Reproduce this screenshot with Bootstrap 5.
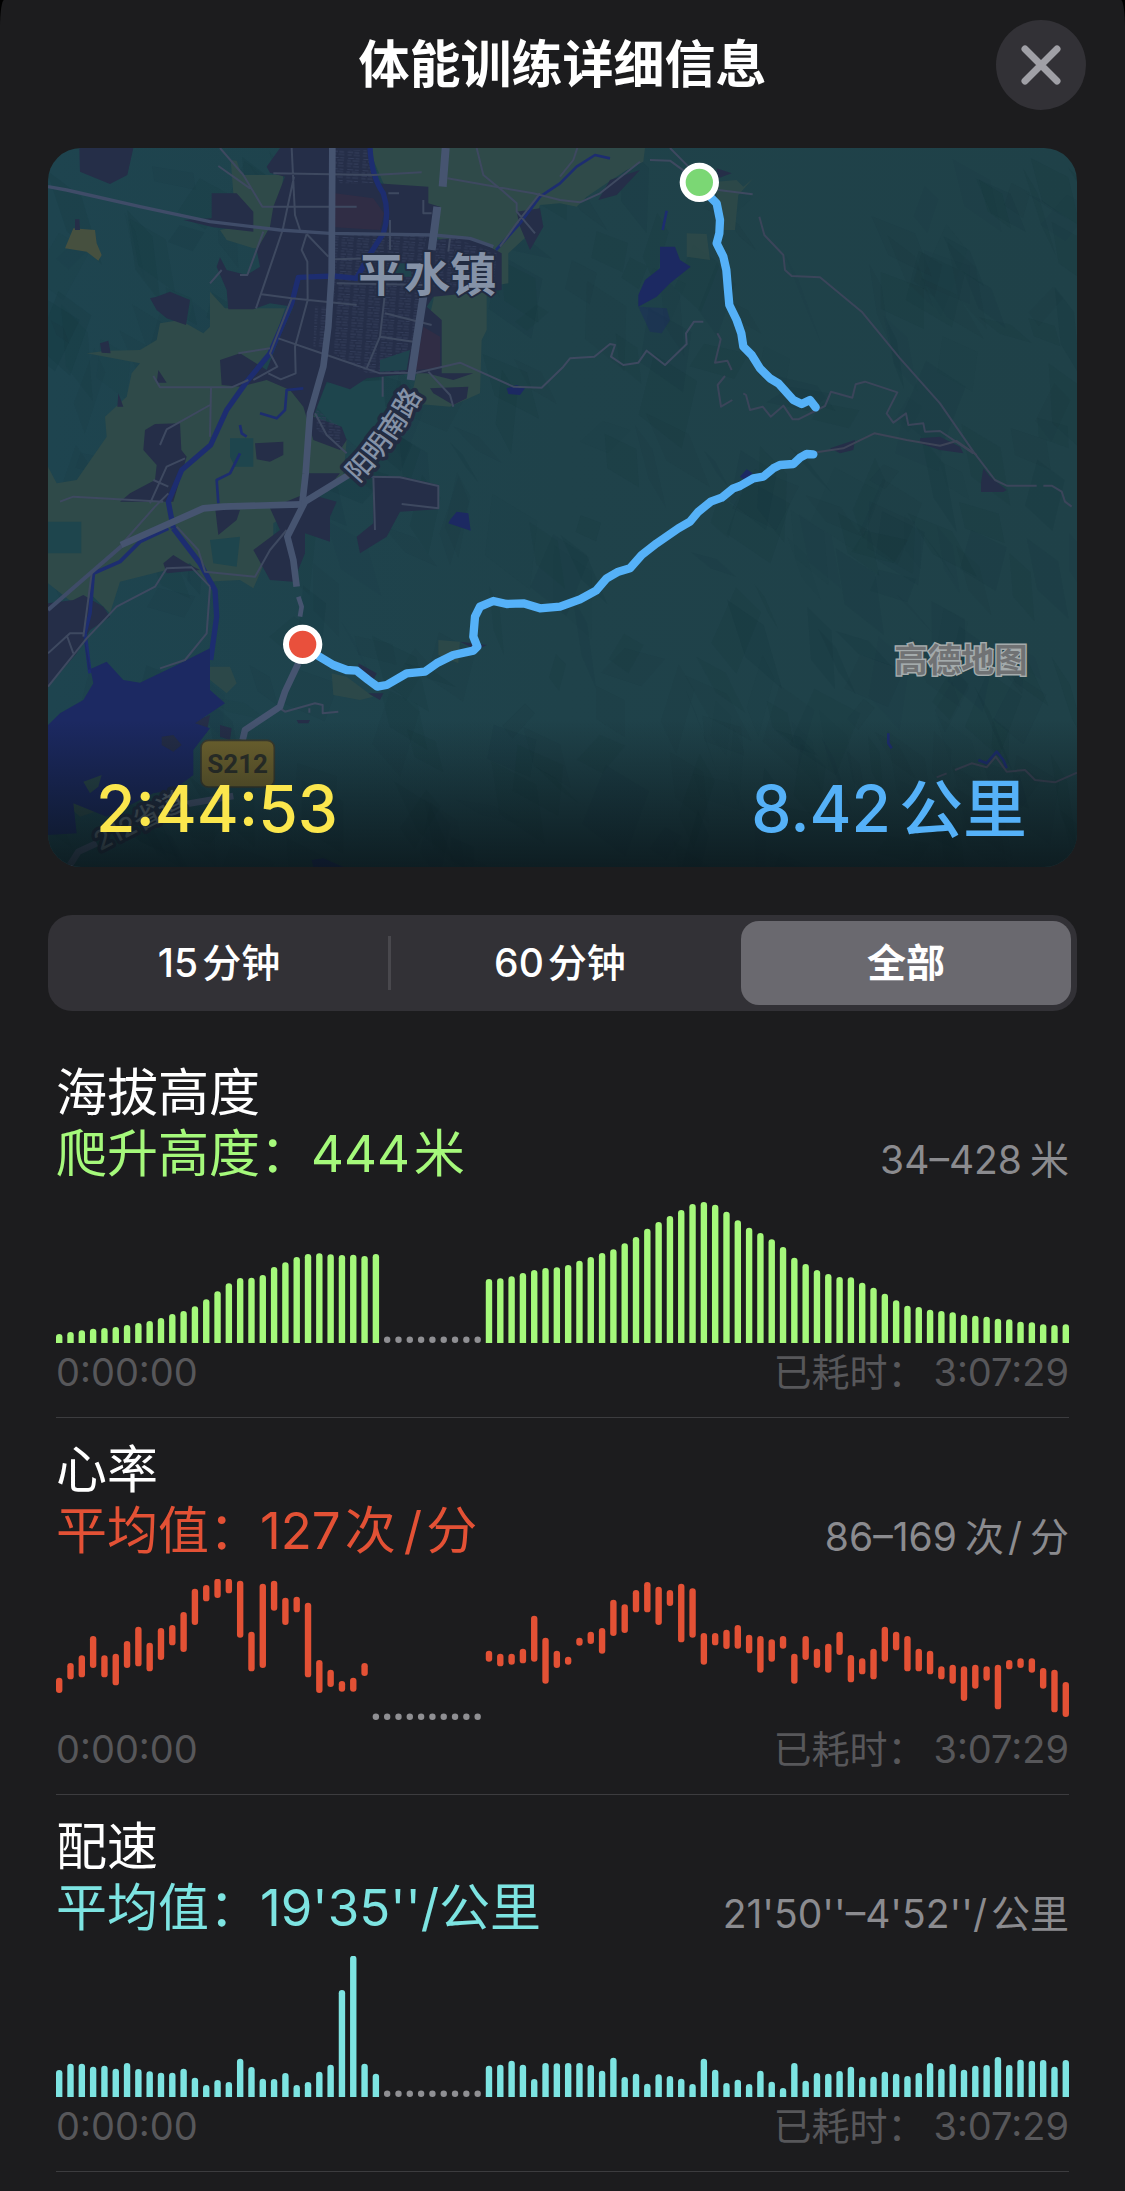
<!DOCTYPE html>
<html lang="zh-CN">
<head>
<meta charset="utf-8">
<meta name="viewport" content="width=device-width, initial-scale=1">
<title>体能训练详细信息</title>
<link href="https://cdn.jsdelivr.net/npm/bootstrap@5.3.0/dist/css/bootstrap.min.css" rel="stylesheet">
<style>
  body { background: #000; color: #fff; font-family: Inter, "Noto Sans CJK SC", sans-serif; }
  .sheet { background: #1c1c1e; border-radius: 4px 4px 0 0 / 28px 28px 0 0; padding-bottom: 19px; }
  .sheet-head { display: grid; grid-template-columns: 90px 1fr 90px; padding: 20px 39px 38px; }
  .sheet-title { grid-column: 2; font-size: 51px; line-height: 60px; font-weight: 700; }
  .close-btn { width: 90px; height: 90px; background: #323136; color: #a0a0a6; }
  .close-btn svg { width: 40px; height: 40px; }
  .map-wrap { margin: 0 48px; border-radius: 33px; }
  .map-foot { padding: 0 50px 22px 48px; font-size: 64px; line-height: 72px; }
  .map-foot .fig { font-weight: 500; }
  .c-time { color: #fbe64d; }
  .c-dist { color: #55b1f8; }
  .c-dist .unit { font-weight: 500; }
  .unit { margin-left: 8px; }
  .unit-near { margin-left: 4px; }
  .seg { margin: 48px 48px 0; background: #323136; border-radius: 24px; padding: 6px; }
  .seg .btn { height: 84px; padding: 0; border: 0; border-radius: 18px; color: #fff; font-size: 39px; line-height: 84px; font-weight: 500; }
  .seg .btn-check:checked + .btn { background: #6a696f; color: #fff; font-weight: 700; }
  .seg .seg-line { width: 3px; height: 54px; margin: 0 4px; background: #49484d; }
  .seg .seg-last { margin-left: 16px; }
  .metrics { padding: 0 56px; margin-top: 30px; }
  .metric { padding: 21px 0 16px; border-bottom: 1px solid #3c3c3f; }
  .metric h2, .metric .total { font-size: 51px; line-height: 61px; font-weight: 400; margin: 0; }
  .metric .range { font-size: 39px; line-height: 48px; color: #8b8b8f; }
  .metric .chart { margin-top: 18px; width: 100%; height: auto; }
  .metric .times { font-size: 38px; line-height: 58px; color: #57575a; }
  .c-alt { color: #a5f97b; }
  .c-heart { color: #e35135; }
  .c-pace { color: #7de4e2; }
</style>
<script src="https://cdn.jsdelivr.net/npm/bootstrap@5.3.0/dist/js/bootstrap.bundle.min.js"></script>
</head>
<body>
<main class="sheet min-vh-100">
  <header class="sheet-head align-items-center">
    <h1 class="sheet-title text-center m-0">体能训练详细信息</h1>
    <button type="button" class="close-btn btn rounded-circle p-0 border-0 d-flex align-items-center justify-content-center" aria-label="关闭">
      <svg viewBox="0 0 40 40" fill="none" stroke="currentColor" stroke-width="7" stroke-linecap="round"><path d="M4 4 36 36M36 4 4 36"/></svg>
    </button>
  </header>

  <section class="map-wrap position-relative overflow-hidden">
    <svg class="d-block w-100 h-auto" viewBox="24 24 3087 2157" role="img" aria-label="路线地图">
      <defs>
        <linearGradient id="tint" x1="0" x2="1" y1="0" y2="0"><stop offset="0" stop-color="#1e444f"/><stop offset=".5" stop-color="#1f424a"/><stop offset="1" stop-color="#1f4148"/></linearGradient>
        <linearGradient id="shade" x1="0" x2="0" y1="0" y2="1"><stop offset="0" stop-color="#091317" stop-opacity="0"/><stop offset="1" stop-color="#091317" stop-opacity=".78"/></linearGradient>
        <pattern id="blocks" width="46" height="34" patternUnits="userSpaceOnUse" patternTransform="rotate(4)"><path d="M4 6h16M24 6h14M4 14h12M22 14h18M6 24h18M28 24h12M4 31h10M20 31h20" stroke="#333d5a" stroke-width="3"/></pattern>
      </defs>
      <rect x="24" y="24" width="3087" height="2157" fill="url(#tint)"/>
      <g id="hills" fill="#0d2a30"></g>

      <g fill="#2f4a49">
        <path d="M985 24H1815L1810 65 1760 90 1700 130 1640 170 1610 200 1560 190 1500 195 1470 280 1405 340V430L1340 440V570L1325 600 1320 760 1230 800 1110 790 1130 700 1180 480 1200 300 1030 130Z"/>
        <path d="M572 60 590 62 605 105H730L722 190 690 260 680 322 640 325 560 300 540 270 640 250 580 160Z"/>
        <path d="M510 455 555 505H735L690 640 640 700 800 740 830 850 920 900 910 1010 790 1090 700 1150 700 1200 660 1300 640 1345 600 1320 500 1325 450 1270 380 1290 240 1325 210 1420 160 1370 100 1390 24 1330V980L50 1030 110 1020 200 890 195 830 260 770 275 700 300 670 140 640 200 632 300 630 350 600 360 550 420 540 490 580 510 560Z"/>
        <path d="M75 1990 110 1970 180 2010 120 2030ZM2030 125 2090 120 2110 140 2140 115 2095 165 2085 270 2030 270ZM1940 280 2000 282 2010 360 1940 350Z" opacity=".8"/>
        <path d="M875 1600 920 1610 1000 1670 960 1680 880 1665ZM1195 1500 1260 1505 1255 1570 1195 1545ZM510 1580 570 1580 590 1630 560 1660 510 1620Z" opacity=".8"/>
      </g>
      <path d="M100 265 165 270 170 310 185 345 175 362 140 335 75 325Z" fill="#46503f"/>
      <path d="M570 895H640V980H585L570 950ZM510 1200 600 1190 590 1280 520 1270ZM24 1145H124V1240H24ZM935 140 1000 120 1025 140 1025 215 990 175 950 165ZM860 730 1030 720 1040 850 960 930 900 880 830 800Z" fill="#1e454d"/>

      <g fill="#252e48">
        <path d="M720 24H985L1000 90 1010 130 1165 140V190L1200 200 1180 300 1290 290 1385 340V450L1180 470 1160 500 1205 540V700L1300 700 1240 720 1160 700 1120 700 980 715 930 748 860 725 820 830 905 860 920 900 900 930 820 900 790 800 750 750 680 720 600 740 545 735 540 660 600 640 680 690 720 590 760 500 690 490 640 508 565 508 560 450 530 380 540 352 560 390 620 405 660 380 650 330 690 260 700 200 735 110 690 98 680 80Z"/>
        <path d="M118 24H280L262 105 210 132 175 118 120 95ZM515 160 590 160 640 215 640 275 520 262 430 240 515 235ZM330 475 350 470 390 455 450 480 438 555 380 535 350 510ZM315 870 345 852 420 850 424 930 440 950 400 1085 240 1085 270 1060 345 1020 350 975 310 930ZM645 910 730 905V945L690 965 650 958ZM180 610 205 602 212 640 185 638ZM235 760 250 800 232 800ZM355 690 380 728 350 728ZM1170 745 1285 740 1280 775 1240 795 1180 760ZM105 238 118 238 120 270H105Z"/>
        <path d="M1000 1010 1090 1010 1195 1035V1108L1080 1115 1040 1190 960 1240 950 1190 1000 1150ZM690 1105 800 1060 890 1085 870 1130 870 1205 795 1180 795 1240 760 1325 690 1320 640 1230 720 1170ZM24 1390 100 1380 130 1365 190 1400 210 1430 150 1470 110 1540 24 1640ZM370 1270 400 1245 440 1270 480 1290 380 1300ZM525 1100 600 1110 590 1140 535 1185ZM800 1000 900 1000 850 1060 790 1065Z"/>
        <path d="M1430 215 1500 205 1510 260 1470 330 1440 260ZM1710 120 1800 90 1730 165 1675 180ZM2030 85 2075 100 2035 115ZM955 1570 1010 1600 1000 1620 960 1600ZM1260 1505 1340 1515 1310 1530ZM985 1660H1030L1020 1680ZM460 1745 510 1725 500 1780 480 1765ZM540 1755 575 1765 570 1800 540 1790ZM770 1740H810L805 1750H775Z"/>
        <path d="M2370 925 2445 900 2440 930 2400 940ZM2640 895 2700 890 2760 920 2770 940 2700 930 2640 910ZM2830 985 2850 1010 2900 1050 2890 1056H2823V1030Z"/>
      </g>
      <path d="M885 30H980L1000 130 900 130 885 100ZM885 285H1160L1150 340 1130 700 980 700 880 640ZM1230 290 1370 340 1360 440 1180 440 1190 300ZM825 500H865V620H820ZM830 810 900 860 910 920 830 870Z" fill="url(#blocks)"/>
      <path d="M885 160 1000 175 1032 220 1020 270 885 262ZM1150 560 1200 590V685L1125 690Z" fill="#302d45"/>
      <path d="M1060 370 1110 370 1115 410 1060 410ZM1020 660 1110 630 1100 690 1020 695Z" fill="#1f434d"/>

      <g fill="none" stroke="#1d2d70" stroke-linejoin="round">
        <path d="M990 24Q995 110 1030 160 1050 220 1030 280L985 350 950 415 880 408 775 412 755 490 690 640 620 725 560 810 512 915 425 990 385 1085 400 1165" stroke-width="16"/>
        <path d="M400 1165 480 1270 525 1350 530 1430 512 1560" stroke-width="16"/>
        <path d="M385 1165 300 1205 240 1265 160 1300 150 1420 135 1480 150 1600" stroke-width="11"/>
        <path d="M1710 55 1665 45 1610 80 1560 130 1500 170 1440 250 1368 330M660 820 710 835 735 810 740 750 790 745M600 940 570 1000 530 1020 535 1090M600 855 605 880 620 890M1880 212 1868 270M2545 1780 2545 1810 2555 1825M2815 1860 2840 1870 2870 1835 2890 1860 2900 1885" stroke-width="8"/>
      </g>
      <g fill="#1c2962">
        <path d="M130 1480 145 1590 200 1565 250 1620 300 1628 400 1580 510 1525 510 1650 555 1690 465 1750 510 1765 460 1830 460 1905 400 1950 340 1960 200 2030 100 1990 110 2080 24 2085V1755L60 1720 130 1680 160 1630Z"/>
        <path d="M1860 320 1905 320 1920 360 1952 380 1890 430 1850 470 1795 500 1795 465 1815 420 1860 385ZM1400 745 1430 735 1455 745 1440 765 1405 762ZM1230 1140 1250 1115 1285 1120 1292 1172 1225 1150ZM2100 1010 2120 988 2138 1000 2115 1020ZM815 2160 850 2155 910 2181H820Z"/>
        <path d="M1795 500 1880 505 1890 540 1865 580 1830 575Z" opacity=".4"/>
      </g>
      <path d="M365 1790 400 1785 425 1815 400 1835 365 1815Z" fill="#242d48"/>
      <path d="M130 1925 185 1905 175 1940 150 1960Z" fill="#29464b"/>

      <g fill="none" stroke="#3e4960" stroke-width="6" stroke-linejoin="round">
        <path d="M755 24 765 225 780 270M540 24 610 105 667 200H950M535 78 630 145M700 100 1000 105 1145 97M762 110 728 270 648 505M670 275 622 405H600M800 282 785 330 802 365 803 480 765 620 767 700 722 718 685 700M800 282 865 350M665 463 755 475 950 495M755 475 690 640 712 680 640 720M715 595 860 645 1020 700 1130 698 1260 668 1420 740 1505 743 1570 680 1590 655 1663 650 1710 612 1725 615 1713 650 1750 675 1795 668 1820 632 1875 675 1940 612 1938 580 1962 545H1990"/>
        <path d="M340 708 360 742H575L625 720M513 745 510 890M510 795 380 868 360 915M690 625 595 640M825 820 860 885 920 940M890 430 1150 435M1035 460 1020 590 980 685M1020 590 1120 605M1035 520 1175 555M885 358 1000 355M1150 180V220H1175M1050 240V330M1045 160H1077M1165 695 1230 765 1240 800M1028 710V770M1230 295 1225 335M1310 24 1330 105 1385 150 1430 190 1430 215 1485 280M1222 115 1480 160 1560 180 1620 187 1680 160 1800 65M1830 60 1890 62 1935 95M1560 110 1600 60 1612 24M1890 24 1945 80M2035 150 2138 163M1500 160 1430 250 1380 320"/>
        <path d="M60 1085 100 1070 370 1085M330 1090 380 980 435 955M340 1020 385 1040M1000 1010 1005 1170M985 1010 1080 1012 1195 1038V1105L1085 1092M243 1215 345 1100 385 1060M410 1160 475 1230 495 1295 645 1310 690 1230 740 1170M510 1340 455 1282 380 1285 345 1340 230 1400 140 1495 24 1640M510 1340 500 1480 435 1560 360 1585M155 1300 130 1490M24 1540 90 1480H130M80 1485 100 1540M720 1705 735 1715 825 1690 848 1695V1720L895 1715M808 1705V1718M545 390 510 430"/>
        <path d="M2158 230 2173 285 2230 345 2235 390 2255 408 2340 412 2465 515 2580 655 2700 790 2800 935 2865 1020 2900 1037H2990M3010 1037H3035L3065 1055 3075 1085 3095 1100M2032 580 2042 598 2025 668 2062 662 2075 690M2055 708 2033 735 2043 800 2077 780M2110 760 2118 765 2130 810 2168 800 2192 830 2230 797 2258 838H2275L2355 798 2373 755 2437 773 2447 733 2475 725 2572 757 2540 820 2560 848 2598 820 2605 855 2650 850 2655 875 2700 873 2800 940" stroke="#3b455a"/>
        <path d="M2330 937 2410 925 2503 880 2600 900 2700 917 2750 903 2810 945M2690 1912 2720 1900M2745 1890 2795 1870 2840 1882 2867 1850 2900 1895 2955 1890 2985 1920 3045 1927 3111 1898" stroke="#3d4457"/>
      </g>
      <g fill="none" stroke="#3f4c68" stroke-linejoin="round">
        <path d="M24 140 80 150 300 200 510 245 720 270 870 280 1180 285 1290 295 1360 320" stroke-width="10"/>
        <path d="M24 1410 245 1218" stroke-width="12"/>
      </g>
      <g fill="none" stroke="#465470" stroke-width="20" stroke-linejoin="round">
        <path d="M877 24 875 400 865 560 850 680 810 820 797 1000 787 1090"/>
        <path d="M1217 24 1208 140M1192 200 1175 330M1150 470 1130 600 1112 720" stroke-width="24"/>
        <path d="M930 1002 795 1085 742 1190 760 1260 770 1340"/>
        <path d="M243 1215 490 1105 550 1100 785 1093"/>
        <path d="M775 1370 785 1400 780 1430" stroke-width="14"/>
        <path d="M775 1570 735 1655 720 1700 615 1770 608 1800"/>
        <path d="M90 2175 115 2135 170 2110M440 1992 580 1968"/>
      </g>

      <path id="roadName" d="M954 1030Q1068 915 1158 745" fill="none"/>
      <g fill="#8592a7" stroke="#222c42" stroke-width="12" stroke-linejoin="round" paint-order="stroke" font-weight="700">
        <text x="955" y="452" font-size="138">平水镇</text>
        <text font-size="82" stroke-width="22" font-weight="500"><textPath href="#roadName">阳明南路</textPath></text>
        <text x="180" y="2134" font-size="80" stroke-width="20" fill="#5a6673" font-weight="500" transform="rotate(-27 180 2134)">212省道</text>
      </g>
      <rect x="483" y="1801" width="220" height="140" rx="22" fill="#71652f" stroke="#3b3c2f" stroke-width="5"/>
      <text x="593" y="1899" font-family="'Liberation Sans Narrow', Roboto, sans-serif" font-weight="700" font-size="78" text-anchor="middle" fill="#2d3029">S212</text>

      <rect x="24" y="1740" width="3087" height="441" fill="url(#shade)"/>
      <text x="2563" y="1596" font-size="100" font-weight="700" fill="#707274" stroke="#a4abac" stroke-width="9" paint-order="stroke">高德地图</text>

      <g fill="none" stroke="#55b1f8" stroke-width="25" stroke-linecap="round" stroke-linejoin="round">
        <path d="M2005 165 2030 190 2040 240 2038 280 2030 310 2050 350 2059 390 2064 450 2068 495 2090 540 2104 580 2110 620 2135 645 2160 685 2190 715 2215 730 2260 780 2285 792 2310 780 2327 802"/>
        <path d="M2320 943 2300 942 2280 953 2260 972 2220 975 2200 985 2170 1010 2140 1015 2100 1038 2080 1045 2045 1073 2012 1085 1975 1115 1950 1145 1915 1165 1850 1210 1805 1245 1770 1285 1735 1295 1700 1315 1668 1352 1620 1378 1560 1400 1500 1405 1450 1390 1400 1392 1360 1383 1320 1400 1305 1430 1300 1490 1312 1520 1300 1532 1240 1545 1190 1570 1155 1595 1100 1600 1040 1635 1012 1640 985 1620 950 1592 920 1590 880 1575 835 1548"/>
      </g>
      <g stroke="#fff" stroke-width="18"><circle cx="1978" cy="127" r="50" fill="#7bd774"/><circle cx="788" cy="1513" r="50" fill="#e9503c"/></g>
    </svg>
    <div class="map-foot position-absolute bottom-0 start-0 end-0 d-flex justify-content-between">
      <span class="fig c-time">2:44:53</span>
      <span class="c-dist"><span class="fig">8.42</span><span class="unit">公里</span></span>
    </div>
  </section>

  <div class="seg d-flex align-items-center" role="group" aria-label="时间范围">
    <input type="radio" class="btn-check" name="span" id="span15" autocomplete="off">
    <label class="btn w-100" for="span15">15<span class="unit-near">分钟</span></label>
    <span class="seg-line flex-shrink-0"></span>
    <input type="radio" class="btn-check" name="span" id="span60" autocomplete="off">
    <label class="btn w-100" for="span60">60<span class="unit-near">分钟</span></label>
    <input type="radio" class="btn-check" name="span" id="spanAll" autocomplete="off" checked>
    <label class="btn seg-last w-100" for="spanAll">全部</label>
  </div>

  <div class="metrics">
    <section class="metric">
      <h2>海拔高度</h2>
      <div class="d-flex justify-content-between align-items-end">
        <div class="total c-alt">爬升高度：444<span class="unit-near">米</span></div>
        <div class="range">34–428<span class="unit">米</span></div>
      </div>
      <svg class="chart c-alt d-block" id="altChart" viewBox="0 0 1013 141" fill="currentColor" role="img" aria-label="海拔高度"></svg>
      <div class="times d-flex justify-content-between"><span>0:00:00</span><span>已耗时：<span class="unit">3:07:29</span></span></div>
    </section>
    <section class="metric">
      <h2>心率</h2>
      <div class="d-flex justify-content-between align-items-end">
        <div class="total c-heart">平均值：127<span class="unit-near">次</span><span class="unit">/</span><span class="unit-near">分</span></div>
        <div class="range">86–169<span class="unit">次</span><span class="unit-near">/</span><span class="unit">分</span></div>
      </div>
      <svg class="chart c-heart d-block" id="heartChart" viewBox="0 0 1013 141" fill="currentColor" role="img" aria-label="心率"></svg>
      <div class="times d-flex justify-content-between"><span>0:00:00</span><span>已耗时：<span class="unit">3:07:29</span></span></div>
    </section>
    <section class="metric">
      <h2>配速</h2>
      <div class="d-flex justify-content-between align-items-end">
        <div class="total c-pace">平均值：19'35''/公里</div>
        <div class="range">21'50''–4'52''/<span class="unit-near">公里</span></div>
      </div>
      <svg class="chart c-pace d-block" id="paceChart" viewBox="0 0 1013 141" fill="currentColor" role="img" aria-label="配速"></svg>
      <div class="times d-flex justify-content-between"><span>0:00:00</span><span>已耗时：<span class="unit">3:07:29</span></span></div>
    </section>
  </div>
</main>

<script>
  // Sample levels are thirds of a chart unit, measured downwards; base is the axis level.
  const PITCH = 11.31, BAR = 6.4, H = 141;
  const altitude = { base: 459,
    before: [432,426,421,416,414,411,405,399,393,384,372,363,349,328,304,280,264,263,255,231,217,201,192,190,193,195,194,198,192],
    after: [267,265,259,249,240,234,232,225,212,201,189,178,160,141,116,96,78,60,42,36,44,65,91,113,129,148,171,203,222,240,252,261,262,278,293,311,331,347,351,359,363,367,374,377,380,386,388,395,397,403,405,403] };
  const pace = { base: 891,
    before: [810,791,791,800,797,806,789,807,814,818,818,806,833,855,840,846,776,801,836,837,819,855,846,815,794,570,467,791,821],
    after: [797,794,782,794,837,789,790,789,789,795,812,773,831,821,851,823,828,836,852,776,809,849,839,852,812,845,864,789,842,819,821,813,800,831,830,815,821,828,819,789,806,792,809,797,795,771,795,779,782,780,800,780] };
  const heart = { base: 720,
    before: [[593,639],[549,598],[526,592],[468,564],[526,592],[521,616],[483,564],[440,559],[488,574],[444,540],[435,496],[396,516],[326,435],[315,364],[296,354],[296,340],[302,473],[455,574],[311,564],[302,392],[353,435],[350,397],[368,592],[540,639],[569,621],[603,635],[593,635],[549,588]],
    after: [[512,545],[521,559],[521,554],[506,550],[407,545],[473,611],[512,564],[530,554],[473,497],[455,492],[444,521],[359,468],[373,459],[330,397],[306,397],[320,435],[330,378],[311,487],[325,473],[459,554],[459,496],[449,507],[435,506],[464,520],[468,578],[478,545],[468,506],[521,611],[468,540],[506,564],[491,578],[455,525],[525,607],[535,583],[506,598],[440,545],[455,511],[468,574],[506,574],[512,583],[559,598],[554,611],[559,663],[554,626],[559,602],[554,688],[540,568],[535,564],[535,578],[564,626],[569,697],[606,711]] };

  function draw(id, data) {
    const total = 90, firstAfter = total - data.after.length, r = BAR / 2;
    const y = v => H - (data.base - v) / 3;
    let out = '';
    const bar = (v, i) => {
      const x = i * PITCH;
      if (Array.isArray(v)) {
        out += `<rect x="${x}" y="${y(v[0])}" width="${BAR}" height="${(v[1] - v[0]) / 3}" rx="${r}"/>`;
      } else {
        out += `<path d="M${x} ${H}V${y(v) + r}a${r} ${r} 0 0 1 ${BAR} 0V${H}z"/>`;
      }
    };
    data.before.forEach(bar);
    for (let i = data.before.length; i < firstAfter; i++) {
      out += `<circle cx="${i * PITCH + r}" cy="${H - r}" r="${r}" fill="#8f8f93"/>`;
    }
    data.after.forEach((v, i) => bar(v, i + firstAfter));
    document.getElementById(id).innerHTML = out;
  }
  draw('altChart', altitude);
  draw('heartChart', heart);
  draw('paceChart', pace);

  // Relief shading: faint facets from a fixed seed, so the hills are the same on each load.
  let seed = 7;
  const rnd = () => (seed = (seed * 16807) % 2147483647) / 2147483647;
  let facets = '';
  for (let i = 0; i < 320; i++) {
    const x = rnd() * 3100, y = rnd() * 2180, w = 30 + rnd() * 110, h = 50 + rnd() * 160, s = rnd() * 160 - 80;
    facets += `<path opacity="${(0.03 + rnd() * 0.07).toFixed(2)}" d="M${x | 0} ${y | 0}l${w | 0} ${h * .4 | 0} ${s | 0} ${h | 0} ${-w | 0} ${-h * .5 | 0}z"/>`;
  }
  document.getElementById('hills').innerHTML = facets;
</script>
</body>
</html>
